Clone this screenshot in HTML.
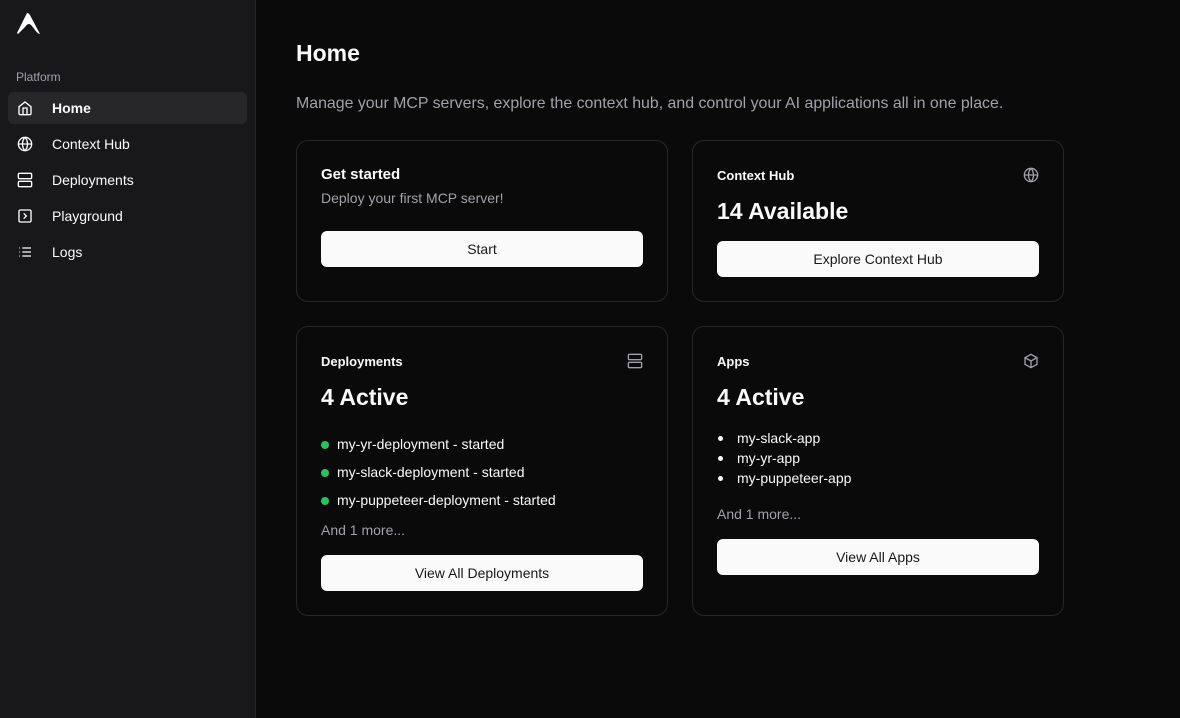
<!DOCTYPE html>
<html><head><style>
*{box-sizing:border-box;margin:0;padding:0}
body{width:1180px;height:718px;background:#0a0a0a;font-family:"Liberation Sans",sans-serif;color:#fafafa;position:relative;overflow:hidden}
.sb{position:absolute;left:0;top:0;width:256px;height:718px;background:#18181b;border-right:1px solid #27272a}
.nav{position:absolute;left:8px;width:239px;height:32px;border-radius:6px;display:flex;align-items:center;font-size:14px}
.nav svg{position:absolute;left:9px;top:8px}
.nav span{position:absolute;left:44px}
.card{position:absolute;border:1px solid #27272a;border-radius:12px;background:#0a0a0a}
.btn{position:absolute;left:24px;width:322px;height:36px;background:#fafafa;color:#18181b;border-radius:6px;font-size:14px;font-weight:500;display:flex;align-items:center;justify-content:center}
.t{position:absolute;left:24px}
.ic{position:absolute;right:24px}
</style></head><body>
<div class="sb">
<svg style="position:absolute;left:16px;top:12px" width="25" height="24" viewBox="0 0 25 24"><path d="M11 1 C13 1 14 3 15 5 L24 22 C21 22 18 16 15 13 C13 11 11 12 9 15 L2 22 L1 21 Z" fill="#fff"/></svg>
<div style="position:absolute;left:16px;top:70px;font-size:12px;color:#a1a1aa">Platform</div>
<div class="nav" style="top:92px;background:#27272a;font-weight:bold"><svg width="16" height="16" viewBox="0 0 24 24" fill="none" stroke="#fff" stroke-width="2"><path d="M3 10l9-7 9 7v10a2 2 0 0 1-2 2H5a2 2 0 0 1-2-2z"/><path d="M9 22V12h6v10"/></svg><span>Home</span></div>
<div class="nav" style="top:128px"><svg width="16" height="16" viewBox="0 0 24 24" fill="none" stroke="#fff" stroke-width="2"><circle cx="12" cy="12" r="10"/><path d="M2 12h20M12 2a15 15 0 0 1 0 20M12 2a15 15 0 0 0 0 20"/></svg><span>Context Hub</span></div>
<div class="nav" style="top:164px"><svg width="16" height="16" viewBox="0 0 24 24" fill="none" stroke="#fff" stroke-width="2"><rect x="2" y="2" width="20" height="8" rx="2"/><rect x="2" y="14" width="20" height="8" rx="2"/><path d="M6 6h.01M6 18h.01"/></svg><span>Deployments</span></div>
<div class="nav" style="top:200px"><svg width="16" height="16" viewBox="0 0 24 24" fill="none" stroke="#fff" stroke-width="2"><rect x="3" y="3" width="18" height="18" rx="2"/><path d="M10 8l4 4-4 4"/></svg><span>Playground</span></div>
<div class="nav" style="top:236px"><svg width="16" height="16" viewBox="0 0 24 24" fill="none" stroke="#fff" stroke-width="2"><path d="M3 6h1M3 12h1M3 18h1M8 6h13M8 12h13M8 18h13"/></svg><span>Logs</span></div>
</div>
<div style="position:absolute;left:296px;top:40px;font-size:23px;font-weight:bold">Home</div>
<div style="position:absolute;left:296px;top:95px;font-size:15.9px;color:#a1a1aa">Manage your MCP servers, explore the context hub, and control your AI applications all in one place.</div>

<div class="card" style="left:296px;top:140px;width:372px;height:162px">
<div class="t" style="top:25px;font-size:15px;font-weight:bold">Get started</div>
<div class="t" style="top:49px;font-size:14px;color:#a1a1aa">Deploy your first MCP server!</div>
<div class="btn" style="top:90px">Start</div>
</div>
<div class="card" style="left:692px;top:140px;width:372px;height:162px">
<div class="t" style="top:27px;font-size:13px;font-weight:bold">Context Hub</div>
<svg class="ic" style="top:26px" width="16" height="16" viewBox="0 0 24 24" fill="none" stroke="#a1a1aa" stroke-width="2"><circle cx="12" cy="12" r="10"/><path d="M2 12h20M12 2a15 15 0 0 1 0 20M12 2a15 15 0 0 0 0 20"/></svg>
<div class="t" style="top:57px;font-size:23px;font-weight:bold">14 Available</div>
<div class="btn" style="top:100px">Explore Context Hub</div>
</div>
<div class="card" style="left:296px;top:326px;width:372px;height:290px">
<div class="t" style="top:27px;font-size:13px;font-weight:bold">Deployments</div>
<svg class="ic" style="top:26px" width="16" height="16" viewBox="0 0 24 24" fill="none" stroke="#a1a1aa" stroke-width="2"><rect x="2" y="2" width="20" height="8" rx="2"/><rect x="2" y="14" width="20" height="8" rx="2"/></svg>
<div class="t" style="top:57px;font-size:23px;font-weight:bold">4 Active</div>
<div class="t" style="top:103px;font-size:14px;line-height:28px">
<div><span style="display:inline-block;width:8px;height:8px;border-radius:50%;background:#22c55e;margin-right:8px"></span>my-yr-deployment - started</div>
<div><span style="display:inline-block;width:8px;height:8px;border-radius:50%;background:#22c55e;margin-right:8px"></span>my-slack-deployment - started</div>
<div><span style="display:inline-block;width:8px;height:8px;border-radius:50%;background:#22c55e;margin-right:8px"></span>my-puppeteer-deployment - started</div>
</div>
<div class="t" style="top:195px;font-size:14px;color:#a1a1aa">And 1 more...</div>
<div class="btn" style="top:228px">View All Deployments</div>
</div>
<div class="card" style="left:692px;top:326px;width:372px;height:290px">
<div class="t" style="top:27px;font-size:13px;font-weight:bold">Apps</div>
<svg class="ic" style="top:26px" width="16" height="16" viewBox="0 0 24 24" fill="none" stroke="#a1a1aa" stroke-width="2"><path d="M12 2l9 5v10l-9 5-9-5V7z"/><path d="M3 7l9 5 9-5M12 12v10"/></svg>
<div class="t" style="top:57px;font-size:23px;font-weight:bold">4 Active</div>
<div class="t" style="top:101px;font-size:14px;line-height:20px">
<div><span style="display:inline-block;width:5px;height:5px;border-radius:50%;background:#fff;margin:0 14px 2px 1px"></span>my-slack-app</div>
<div><span style="display:inline-block;width:5px;height:5px;border-radius:50%;background:#fff;margin:0 14px 2px 1px"></span>my-yr-app</div>
<div><span style="display:inline-block;width:5px;height:5px;border-radius:50%;background:#fff;margin:0 14px 2px 1px"></span>my-puppeteer-app</div>
</div>
<div class="t" style="top:179px;font-size:14px;color:#a1a1aa">And 1 more...</div>
<div class="btn" style="top:212px">View All Apps</div>
</div>
</body></html>
